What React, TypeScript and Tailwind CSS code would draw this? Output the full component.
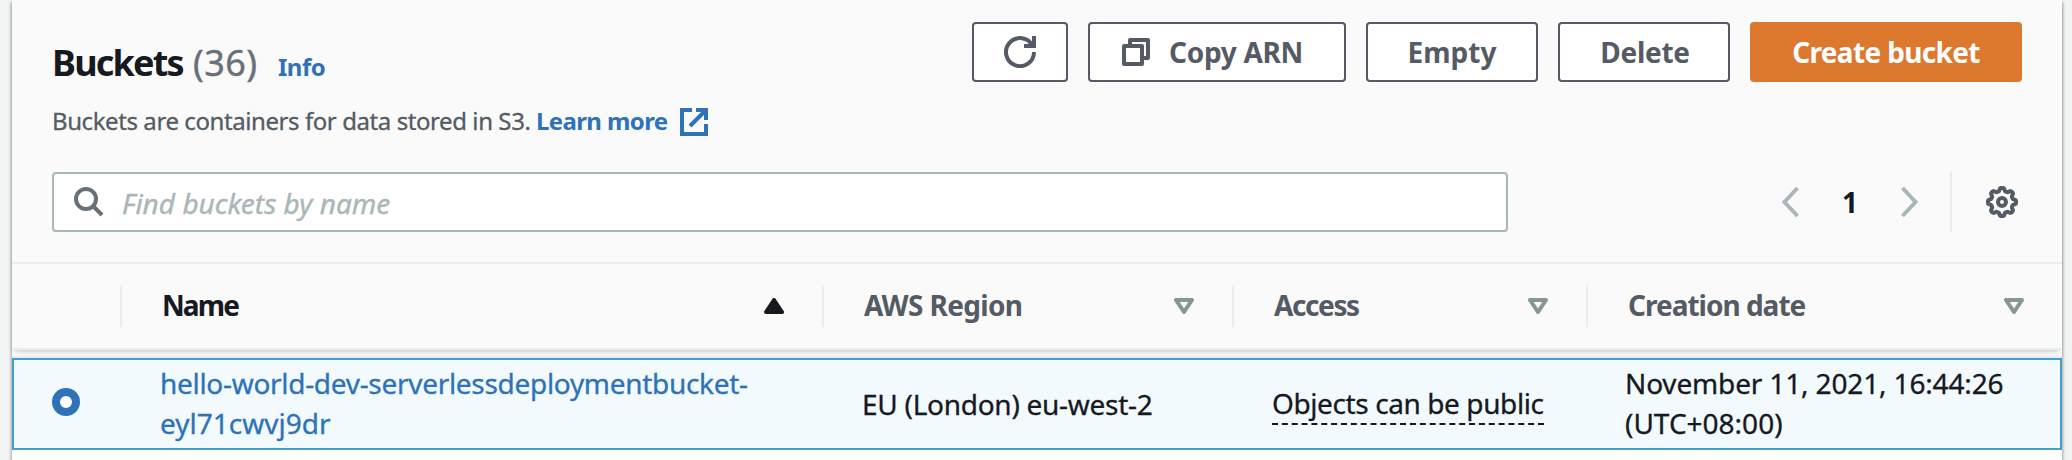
import type { ReactNode } from "react";

function Icon({ children, className = "" }: { children: ReactNode; className?: string }) {
  return (
    <svg viewBox="0 0 16 16" fill="none" stroke="currentColor" strokeWidth="2" className={`size-8 shrink-0 ${className}`}>
      {children}
    </svg>
  );
}

const gear = Array.from({ length: 97 }, (_, i) => {
  const a = (i / 96) * Math.PI * 2;
  const r = 6.3 + 0.75 * Math.max(-1, Math.min(1, 1.6 * Math.cos(8 * a)));
  return `${i ? "L" : "M"}${(8 + r * Math.sin(a)).toFixed(2)} ${(8 - r * Math.cos(a)).toFixed(2)}`;
}).join("");

function Button({ children, className }: { children: ReactNode; className: string }) {
  return (
    <button className={`flex h-[60px] items-center justify-center rounded-[4px] border-2 pb-px text-[28px] font-bold whitespace-nowrap ${className}`}>
      {children}
    </button>
  );
}

function HeaderCell({ label, className, sorted }: { label: string; className: string; sorted?: boolean }) {
  return (
    <div className={`flex h-[42px] items-center justify-between border-l-2 border-[#eaeded] pb-0.5 pl-10 font-bold whitespace-nowrap ${className}`}>
      <span>{label}</span>
      <svg viewBox="0 0 20 16" className="mt-px h-4 w-5" strokeLinejoin="round" strokeWidth="4">
        {sorted ? (
          <path d="M10 2 18 14H2Z" fill="#16191f" stroke="#16191f" />
        ) : (
          <path d="M2 2h16L10 14Z" fill="none" stroke="#879596" />
        )}
      </svg>
    </div>
  );
}

export default function App() {
  return (
    <div className="h-[460px] overflow-hidden bg-[#f2f3f3] px-3 font-['Noto_Sans','Open_Sans',sans-serif] text-[28px] leading-10 text-[#16191f]">
      <div className="h-[480px] w-[2050px] bg-white shadow-[0_2px_2px_rgba(0,28,36,0.3),2px_2px_2px_rgba(0,28,36,0.15),-2px_2px_2px_rgba(0,28,36,0.15)]">
        <div className="relative z-10 h-[350px] border-b-2 border-[#eaeded] bg-[#fafafa] shadow-[0_4px_6px_-3px_rgba(0,28,36,0.3)]">
          <div className="flex h-[172px] justify-between pr-10 pl-10">
            <div className="pt-[39px]">
              <div className="flex items-baseline whitespace-nowrap">
                <h1 className="w-[141px] text-[36px] leading-[48px] font-bold tracking-[-1.8px]">Buckets</h1>
                <span className="w-[85px] text-[36px] leading-[48px] tracking-[0.4px] text-[#687078] [-webkit-text-stroke:0.4px]">(36)</span>
                <a className="text-[24px] font-bold tracking-[-0.5px] text-[#2e72b8]">Info</a>
              </div>
              <div className="mt-[14px] flex items-center text-[24px] whitespace-nowrap text-[#545b64]">
                <span className="w-[484px] pb-0.5 tracking-[-0.42px] [-webkit-text-stroke:0.3px]">Buckets are containers for data stored in S3.</span>
                <a className="flex items-center text-[#2e72b8]">
                  <span className="w-[142px] pb-0.5 font-bold tracking-[-0.62px]">Learn more</span>
                  <Icon>
                    <path d="M14 9v5H2V2h5M9 2h5v5M6 10l8-8" />
                  </Icon>
                </a>
              </div>
            </div>
            <div className="flex gap-5 pt-[22px] text-[#545b64]">
              <Button className="w-24 border-[#545b64] bg-white">
                <Icon className="mt-px">
                  <path d="M10 5h5V0M15 8a7 7 0 1 1-.7-3" />
                </Icon>
              </Button>
              <Button className="w-[258px] gap-[17px] border-[#545b64] bg-white pr-[11px] tracking-[-0.3px]">
                <Icon className="mt-px">
                  <path d="M2 5h9v9H2ZM5 4V2h9v9h-2" strokeLinejoin="round" />
                </Icon>
                Copy ARN
              </Button>
              <Button className="w-[172px] border-[#545b64] bg-white">Empty</Button>
              <Button className="w-[172px] border-[#545b64] bg-white pl-0.5 tracking-[-0.3px]">Delete</Button>
              <Button className="w-[272px] border-[#dd782f] bg-[#dd782f] tracking-[-0.65px] text-white">Create bucket</Button>
            </div>
          </div>
          <div className="flex h-[60px] items-center pl-10">
            <div className="flex h-[60px] w-[1456px] items-center rounded-[4px] border-2 border-[#aab7b8] bg-white pl-5">
              <svg viewBox="0 0 30 30" fill="none" stroke="#687078" strokeWidth="4" className="size-[30px]">
                <circle cx="12" cy="12" r="10" />
                <path d="m19 19 9 9" />
              </svg>
              <span className="mt-0.5 ml-[18px] tracking-[0.02px] text-[#aab7b8] italic [-webkit-text-stroke:0.4px]">Find buckets by name</span>
            </div>
            <svg viewBox="0 0 20 32" fill="none" stroke="#aab7b8" strokeWidth="4" className="ml-[272px] h-8 w-5">
              <path d="M17.5 2 4.5 16l13 14" />
            </svg>
            <span className="w-[100px] text-center font-bold">1</span>
            <svg viewBox="0 0 20 32" fill="none" stroke="#aab7b8" strokeWidth="4" className="h-8 w-5">
              <path d="m2.5 2 13 14-13 14" />
            </svg>
            <div className="ml-[30px] h-full w-0.5 bg-[#eaeded]" />
            <Icon className="ml-[34px] text-[#545b64]">
              <path d={gear} />
              <circle cx="8" cy="8" r="2" />
            </Icon>
          </div>
          <div className="mt-[30px] flex h-[86px] items-center border-t-2 border-[#eaeded] pl-[108px] text-[#545b64]">
            <HeaderCell label="Name" sorted className="w-[702px] pr-[38px] tracking-[-1.9px] text-[#16191f]" />
            <HeaderCell label="AWS Region" className="w-[410px] pr-[38px] tracking-[-0.65px]" />
            <HeaderCell label="Access" className="w-[354px] pr-[38px] tracking-[-1.4px]" />
            <HeaderCell label="Creation date" className="w-[476px] pr-[38px] tracking-[-1px]" />
          </div>
        </div>
        <div className="mt-1.5 border-t-2 border-[#eaeded]">
          <div className="flex h-[92px] items-center border-2 border-[#44a0c8] bg-[#f2fafd] pb-0.5 pl-[38px] whitespace-nowrap [-webkit-text-stroke:0.3px]">
            <div className="mb-0.5 flex size-7 items-center justify-center rounded-full bg-[#2e72b8]">
              <div className="size-3 rounded-full bg-white" />
            </div>
            <a className="ml-20 w-[702px] text-[#2e72b8]">
              <span className="tracking-[-0.3px]">hello-world-dev-serverlessdeploymentbucket-</span>
              <br />
              eyl71cwvj9dr
            </a>
            <div className="mt-0.5 w-[410px] tracking-[-0.27px]">EU (London) eu-west-2</div>
            <div className="w-[353px]">
              <span className="block h-[43px] w-[272px] border-b-2 border-dashed border-[#16191f] pt-px tracking-[-0.4px]">Objects can be public</span>
            </div>
            <div>
              <span className="tracking-[-0.15px]">November 11, 2021, 16:44:26</span>
              <br />
              (UTC+08:00)
            </div>
          </div>
        </div>
      </div>
    </div>
  );
}
